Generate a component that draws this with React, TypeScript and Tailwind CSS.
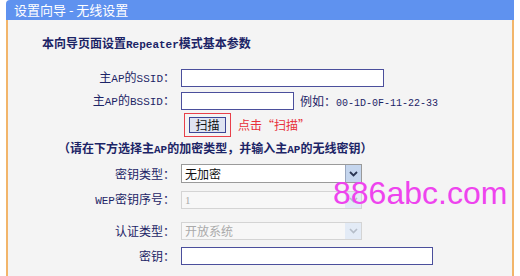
export default function App() {
  const label = "w-[168px] shrink-0 pr-[1px] text-right text-[12px] leading-[18px] text-[#1c2466]";
  const cjk = { fontFamily: '"Noto Sans CJK SC", "Noto Sans", sans-serif' };
  const mono = { fontFamily: '"Liberation Mono", monospace' };

  return (
    <div className="relative h-[276px] w-[520px] overflow-hidden bg-white" style={cjk}>
      <div className="ml-[6px] w-[508px]">
        <div className="flex h-[20px] items-center rounded-tl-[4px] bg-[#5f92ef] pl-[8px] text-[13px] text-white">
          设置向导 - 无线设置
        </div>
        <div className="flex h-[256px] flex-col border-x-2 border-[#f2b56a] bg-[#f4f4f4]">
          <div className="mt-[15px] h-[16px] pl-[34px] text-[12px] font-bold leading-[16px] text-[#1c2466]">
            本向导页面设置<span style={mono} className="text-[11px]">Repeater</span>模式基本参数
          </div>

          <div className="mt-[18px] flex h-[18px] items-center">
            <div className={label}>
              主<span style={mono} className="text-[11px]">AP</span>的<span style={mono} className="text-[11px]">SSID</span>：
            </div>
            <div className="ml-[5px] h-[18px] w-[203px] border border-[#4b4f9c] bg-white" />
          </div>

          <div className="mt-[5px] flex h-[18px] items-center">
            <div className={label}>
              主<span style={mono} className="text-[11px]">AP</span>的<span style={mono} className="text-[11px]">BSSID</span>：
            </div>
            <div className="ml-[5px] h-[18px] w-[113px] border border-[#4b4f9c] bg-white" />
            <div className="ml-[6px] text-[12px] text-[#1c2466]">
              例如：<span style={mono} className="text-[10px]">00-1D-0F-11-22-33</span>
            </div>
          </div>

          <div className="mt-[3px] flex h-[24px] items-center">
            <div className="ml-[176px] flex h-[24px] w-[47px] items-center justify-center border border-[#e8404a]">
              <div className="flex h-[16px] w-[37px] items-center justify-center border border-[#3c4696] bg-[#dfe4f2] text-[12px] leading-none text-[#111]">
                扫描
              </div>
            </div>
            <div className="ml-[7px] text-[12px] text-[#e8303a]">点击“扫描”</div>
          </div>

          <div className="mt-[3px] h-[16px] pl-[50px] text-[12px] font-bold leading-[16px] text-[#1c2466]">
            （请在下方选择主<span style={mono} className="text-[11px]">AP</span>的加密类型，并输入主<span style={mono} className="text-[11px]">AP</span>的无线密钥）
          </div>

          <div className="mt-[8px] flex h-[19px] items-center">
            <div className={label}>密钥类型：</div>
            <div className="ml-[5px] flex h-[19px] w-[181px] items-stretch border border-[#9a9a9a] bg-white">
              <div className="flex-1 pl-[3px] text-[12px] leading-[17px] text-[#111]">无加密</div>
              <div className="flex w-[16px] items-center justify-center border-l border-[#9aa8c0] bg-[#c5d6ee]">
                <svg width="9" height="6" viewBox="0 0 9 6">
                  <path d="M1 1 L4.5 4.5 L8 1" fill="none" stroke="#2a3552" strokeWidth="1.8" />
                </svg>
              </div>
            </div>
          </div>

          <div className="mt-[8px] flex h-[18px] items-center">
            <div className={label}>
              <span style={mono} className="text-[11px]">WEP</span>密钥序号：
            </div>
            <div className="ml-[5px] flex h-[18px] w-[181px] items-stretch border border-[#d4d4d4] bg-[#f7f7f7]">
              <div className="flex-1 pl-[3px] text-[11px] leading-[16px] text-[#aaa]" style={{ fontFamily: '"Liberation Serif", serif' }}>1</div>
              <div className="flex w-[16px] items-center justify-center bg-[#e3ebf6]">
                <svg width="9" height="6" viewBox="0 0 9 6">
                  <path d="M1 1 L4.5 4.5 L8 1" fill="none" stroke="#b5bdc8" strokeWidth="1.6" />
                </svg>
              </div>
            </div>
          </div>

          <div className="mt-[13px] flex h-[18px] items-center">
            <div className={label}>认证类型：</div>
            <div className="ml-[5px] flex h-[18px] w-[181px] items-stretch border border-[#d4d4d4] bg-[#f7f7f7]">
              <div className="flex-1 pl-[3px] text-[12px] leading-[16px] text-[#aaa]">开放系统</div>
              <div className="flex w-[16px] items-center justify-center bg-[#e3ebf6]">
                <svg width="9" height="6" viewBox="0 0 9 6">
                  <path d="M1 1 L4.5 4.5 L8 1" fill="none" stroke="#b5bdc8" strokeWidth="1.6" />
                </svg>
              </div>
            </div>
          </div>

          <div className="mt-[7px] flex h-[18px] items-center">
            <div className={label}>密钥：</div>
            <div className="ml-[5px] h-[18px] w-[252px] border border-[#4b4f9c] bg-white" />
          </div>
        </div>
      </div>

      <div
        className="absolute left-[333px] top-[175px] text-[32px] leading-[36px] text-[#ee44ee]"
        style={{ fontFamily: '"Liberation Sans", Arial, sans-serif' }}
      >
        886abc.com
      </div>
    </div>
  );
}
